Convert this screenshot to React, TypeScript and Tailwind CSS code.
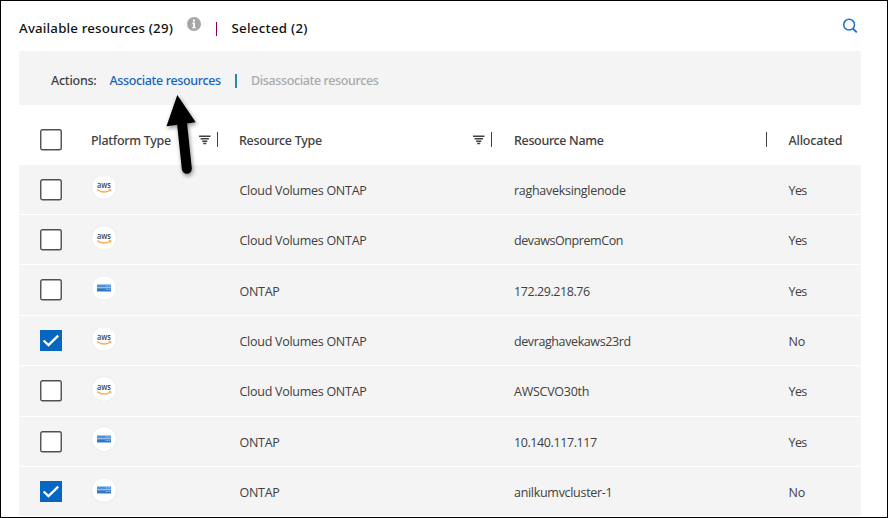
type Platform = 'aws' | 'onprem';

interface Resource {
  platform: Platform;
  type: string;
  typeTracking: string;
  name: string;
  nameTracking: string;
  allocated: boolean;
  selected: boolean;
  height: string;
  iconPad: string;
  textPad: string;
}

const CVO = { platform: 'aws' as const, type: 'Cloud Volumes ONTAP', typeTracking: 'tracking-[-0.27px]', textPad: 'pt-[16px]' };
const ONTAP = { platform: 'onprem' as const, type: 'ONTAP', typeTracking: 'tracking-[-0.28px]', textPad: 'pt-[16px]' };

const resources: Resource[] = [
  { ...CVO, name: 'raghaveksinglenode', nameTracking: 'tracking-[-0.29px]', allocated: true, selected: false, height: 'h-[50px]', iconPad: 'pt-[9px]' },
  { ...CVO, name: 'devawsOnpremCon', nameTracking: 'tracking-[-0.42px]', allocated: true, selected: false, height: 'h-[50px]', iconPad: 'pt-[10px]' },
  { ...ONTAP, name: '172.29.218.76', nameTracking: 'tracking-[-0.43px]', allocated: true, selected: false, height: 'h-[51px]', iconPad: 'pt-[10px]', textPad: 'pt-[17px]' },
  { ...CVO, name: 'devraghavekaws23rd', nameTracking: 'tracking-[-0.4px]', allocated: false, selected: true, height: 'h-[50px]', iconPad: 'pt-[10px]' },
  { ...CVO, name: 'AWSCVO30th', nameTracking: 'tracking-[-0.26px]', allocated: true, selected: false, height: 'h-[51px]', iconPad: 'pt-[10px]' },
  { ...ONTAP, name: '10.140.117.117', nameTracking: 'tracking-[-0.41px]', allocated: true, selected: false, height: 'h-[50px]', iconPad: 'pt-[9px]' },
  { ...ONTAP, name: 'anilkumvcluster-1', nameTracking: 'tracking-[-0.3px]', allocated: false, selected: true, height: 'h-[50px]', iconPad: 'pt-[10px]' },
];

const GRID = 'grid grid-cols-[72px_148px_275px_274px_73px]';

function Checkbox({ checked = false }: { checked?: boolean }) {
  if (checked) {
    return (
      <span className="block h-[21px] w-[22px] bg-[#0667c3]">
        <svg viewBox="0 0 22 22" className="size-[22px]" fill="none" stroke="white" strokeWidth="2.3">
          <path d="M3.6 10.5 8.5 15.1 18.2 5.6" />
        </svg>
      </span>
    );
  }
  return (
    <svg viewBox="0 0 22 22" className="block size-[22px]">
      <rect x="0.75" y="0.75" width="20.5" height="20" rx="1.8" fill="white" stroke="#505050" strokeWidth="1.4" />
    </svg>
  );
}

function FilterIcon() {
  return (
    <svg viewBox="0 0 12 10" className="h-[10px] w-[12px]" stroke="#404040" strokeWidth="1.4">
      <path d="M0 1.2h11.5M1.6 3.7h8.3M3.2 6.2h5.1M4.2 8.5h3.1" />
    </svg>
  );
}

function PlatformIcon({ platform }: { platform: Platform }) {
  return (
    <span className="flex size-[26px] items-center justify-center rounded-full border border-[#ececec] bg-white">
      {platform === 'aws' ? (
        <svg viewBox="0 0 20 18" className="h-[18px] w-5">
          <text x="3" y="10" textLength="14" lengthAdjust="spacingAndGlyphs" fontSize="8.6" fontWeight="600" fill="#3d4654" fontFamily="'Open Sans', sans-serif">
            aws
          </text>
          <path d="M3.2 11.6c3.8 2.7 9 2.8 12.8.8M14.8 11.5c2.6-.4 2.4.4 1.5 2" fill="none" stroke="#f9ae59" strokeWidth="1.3" />
        </svg>
      ) : (
        <svg viewBox="0 0 14 8" className="h-2 w-[14px]">
          <path fill="#4b93dc" d="M0 .5h14v3.2H0z" />
          <path fill="#a9cbee" d="M0 3.4h14v.8H0z" />
          <path fill="#2f78c6" d="M0 4.2h14v3.3H0z" />
          <path fill="#d5e6f7" d="M8.8 1.5h.8v.8h-.8zM10.5 1.5h.8v.8h-.8zM12.2 1.5h.8v.8h-.8zM8.8 5.3h.8v.8h-.8zM10.5 5.3h.8v.8h-.8zM12.2 5.3h.8v.8h-.8z" />
        </svg>
      )}
    </span>
  );
}

function PointerArrow() {
  return (
    <svg viewBox="0 0 50 95" className="absolute left-[154px] top-[84px] h-[95px] w-[50px] drop-shadow-[1px_2px_2px_rgba(0,0,0,0.45)]">
      <path d="M22.3 10 40.7 37.2 11.5 41.3Z" fill="black" />
      <path d="M26.8 36 31.8 83.8" stroke="black" strokeWidth="10" strokeLinecap="round" />
    </svg>
  );
}

export default function App() {
  return (
    <div className="relative h-[518px] w-[888px] overflow-hidden border border-black bg-white pl-[18px] pr-[26px] font-['Open_Sans',sans-serif] text-[12.5px] leading-[20px] text-[#404040]">
      <header className="flex h-[50px] font-['Noto_Sans',sans-serif] text-[13.3px] font-medium text-[#111]">
        <span className="w-[168px] whitespace-nowrap pt-[17px] tracking-[0.17px]">Available resources (29)</span>
        <svg viewBox="0 0 14 14" className="mt-4 size-[14px]">
          <circle cx="7" cy="7" r="7" fill="#a6a6a6" />
          <path d="M6 2.6h2v1.8H6zM5.2 5.6H8v4.6h1v1.1H5v-1.1h1.1V6.7h-.9z" fill="white" />
        </svg>
        <span className="ml-[15px] mt-[21px] h-[14px] w-px bg-[#850052]" />
        <span className="ml-[14.5px] pt-[17px] tracking-[0.27px]">Selected (2)</span>
        <svg viewBox="0 0 16 16" className="ml-auto mr-[3px] mt-4 size-4" fill="none" stroke="#1870c8" strokeWidth="1.5">
          <circle cx="7.1" cy="7.7" r="5.4" />
          <path d="M11 11.6 14.8 15.4" strokeWidth="1.9" />
        </svg>
      </header>

      <div className="flex h-[54px] items-center bg-[#f4f4f4] pl-8 font-['Noto_Sans',sans-serif] font-medium">
        <span className="w-[58.5px] pt-[5px] tracking-[-0.24px]">Actions:</span>
        <span className="w-[125.5px] whitespace-nowrap pt-[5px] tracking-[-0.36px] text-[#1663be]">Associate resources</span>
        <span className="mt-[5px] h-[14px] w-[2px] bg-[#2b88bb]" />
        <span className="ml-[14px] pt-[5px] tracking-[-0.37px] text-[#a9a9a9]">Disassociate resources</span>
      </div>

      <div className={`${GRID} h-[60px] pt-[26px] font-['Noto_Sans',sans-serif] font-medium`}>
        <div className="-mt-[2px] pl-[21px]">
          <Checkbox />
        </div>
        <div className="flex items-start">
          <span className="tracking-[-0.29px]">Platform Type</span>
          <span className="-mr-px ml-auto mt-[4px]">
            <FilterIcon />
          </span>
          <span className="ml-[7px] mr-[21px] mt-px h-[15px] w-px bg-[#404040]" />
        </div>
        <div className="flex items-start">
          <span className="tracking-[-0.28px]">Resource Type</span>
          <span className="ml-auto mt-[4px]">
            <FilterIcon />
          </span>
          <span className="ml-[6px] mr-[22px] mt-px h-[15px] w-px bg-[#404040]" />
        </div>
        <div className="flex items-start">
          <span className="tracking-[-0.35px]">Resource Name</span>
          <span className="ml-auto mr-[21px] mt-px h-[15px] w-px bg-[#404040]" />
        </div>
        <div className="pl-[0.5px] tracking-[-0.2px]">Allocated</div>
      </div>

      {resources.map((r) => (
        <div key={r.name} className={`${GRID} ${r.height} border-b border-white bg-[#f4f4f4]`}>
          <div className="pl-[21px] pt-[14px]">
            <Checkbox checked={r.selected} />
          </div>
          <div className={r.iconPad}>
            <PlatformIcon platform={r.platform} />
          </div>
          <div className={`${r.textPad} pl-[0.5px] ${r.typeTracking}`}>{r.type}</div>
          <div className={`${r.textPad} ${r.nameTracking}`}>{r.name}</div>
          <div className={`${r.textPad} pl-[0.5px] ${r.allocated ? 'tracking-[-0.6px]' : 'tracking-[-0.2px]'}`}>{r.allocated ? 'Yes' : 'No'}</div>
        </div>
      ))}

      <PointerArrow />
    </div>
  );
}
